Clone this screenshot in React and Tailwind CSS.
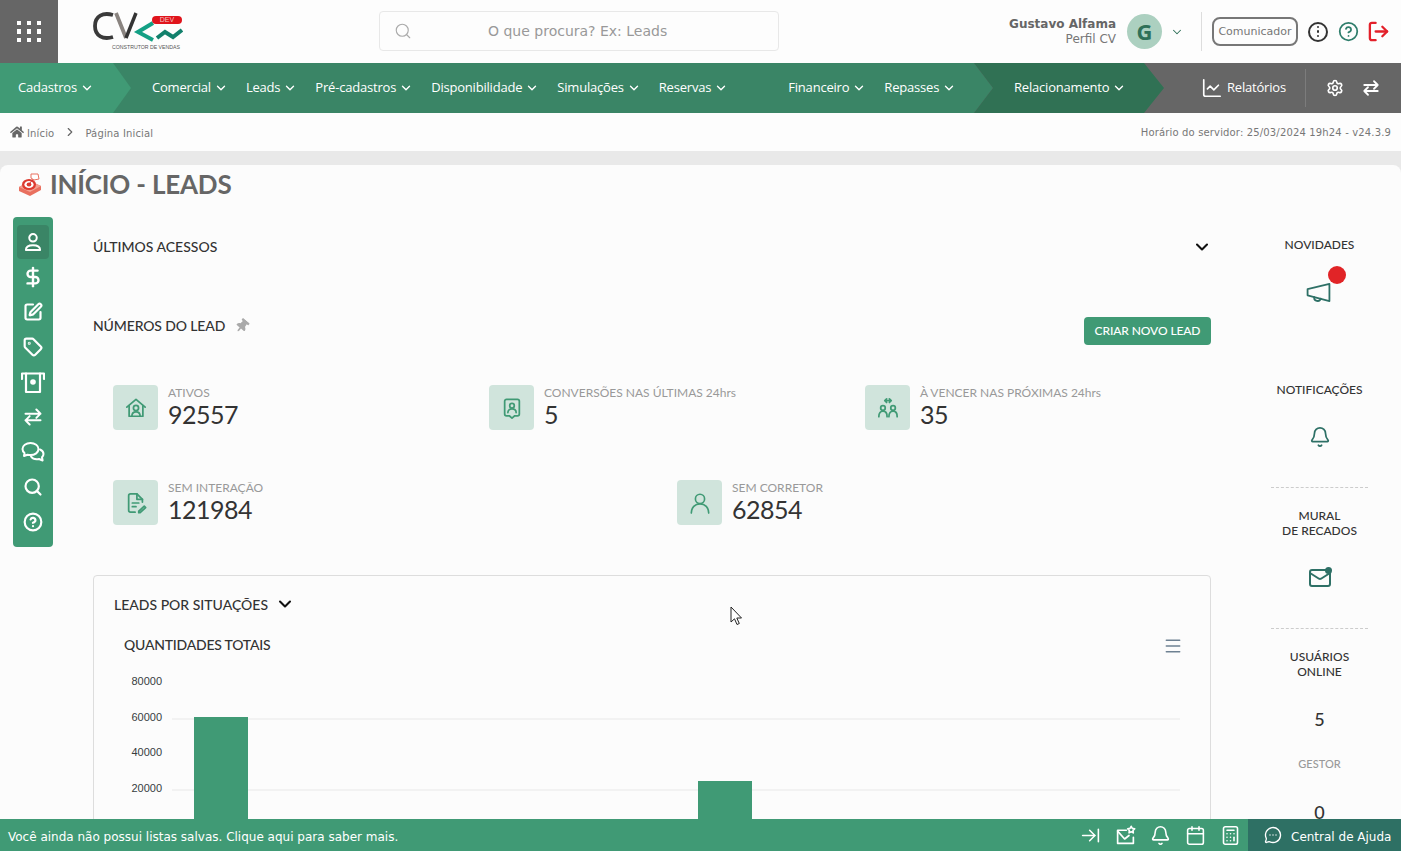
import { ArrowRightToLine, Bell, Calculator, Calendar, ChartLine, ChevronDown, ChevronRight, CircleHelp, LogOut, Mail, MessageCircleMore, Search, Settings, SquarePen, Tag, DollarSign, Menu } from 'lucide-react';
import { FaHome, FaThumbtack } from 'react-icons/fa';

const verdana = "font-['DejaVu_Sans',sans-serif]";

const Swap = ({ className }) => (
  <svg viewBox="0 0 24 24" className={className} fill="none" stroke="currentColor" strokeWidth="2.4" strokeLinecap="round" strokeLinejoin="round">
    <path d="M3 8h18M16 3l5 5-5 5" />
    <path d="M21 16H3M8 11l-5 5 5 5" />
  </svg>
);

const Logo = () => (
  <div className="relative w-[90px] h-[40px]">
    <svg viewBox="0 0 90 40" className="absolute left-0 top-0 w-[90px] h-[40px]" fill="none">
      <path d="M20 3C10 0 2 4 2 14s8 14 18 11" stroke="#3a3a3a" strokeWidth="3.8" />
      <path d="M23 1l10 25" stroke="#8a8480" strokeWidth="3.8" />
      <path d="M33 26L43 1" stroke="#333" strokeWidth="3.4" />
      <path d="M60 11l-15 9 15 8" stroke="#14a085" strokeWidth="4" />
      <path d="M64 26l8-6 8 5 9-7" stroke="#12806c" strokeWidth="4" />
    </svg>
    <span className="absolute left-[59px] top-[4px] w-[30px] h-[8px] rounded-full bg-[#e0141c] text-[#f4c0c0] text-[7px] leading-[8px] text-center font-['Liberation_Sans',sans-serif]">DEV</span>
    <span className="absolute left-[19px] top-[32px] whitespace-nowrap text-[5.2px] leading-[7px] text-[#555] font-['Liberation_Sans',sans-serif]">CONSTRUTOR DE VENDAS</span>
  </div>
);

const TitleIcon = () => (
  <svg viewBox="0 0 24 24" className="w-[24px] h-[24px]">
    <path d="M1 15l11-6 11 5v4l-11 6-11-5z" fill="#e9705f" />
    <path d="M1 15l11 5 11-6-11-5z" fill="#f4a092" />
    <ellipse cx="11" cy="12.5" rx="7" ry="5.5" fill="#dd3b30" />
    <ellipse cx="11" cy="12.5" rx="4.6" ry="3.6" fill="#fff" />
    <ellipse cx="11" cy="12.5" rx="2.4" ry="1.9" fill="#dd3b30" />
    <path d="M11 12L17 5" stroke="#c33" strokeWidth="1" />
    <path d="M13 2h7l1 5-5 1-3-2z" fill="#fff" stroke="#e9705f" strokeWidth="1" />
  </svg>
);

const SideUser = ({ className }) => (
  <svg viewBox="0 0 24 24" className={className} fill="none" stroke="currentColor" strokeWidth="2.4" strokeLinejoin="round">
    <circle cx="12" cy="7" r="4.500" />
    <path d="M3.500 21.500c0-3.500 3.500-5.500 8.500-5.500s8.500 2 8.500 5.500z" />
  </svg>
);

const AtmIcon = ({ className }) => (
  <svg viewBox="0 0 24 24" className={className} fill="none" stroke="currentColor" strokeWidth="2.2" strokeLinecap="round" strokeLinejoin="round">
    <path d="M1 9V3.500h22V9" />
    <path d="M5 3.500V22h14V3.500" />
    <circle cx="12" cy="12" r="2.800" fill="currentColor" stroke="none" />
  </svg>
);

const ChatsIcon = ({ className }) => (
  <svg viewBox="0 0 24 24" className={className} fill="none" stroke="currentColor" strokeWidth="2" strokeLinecap="round" strokeLinejoin="round">
    <path d="M9.500 3C5 3 1.500 5.700 1.500 9c0 1.600.8 3 2 4L3 16l3.500-1.300c1 .3 2 .4 3 .4 4.500 0 8-2.700 8-6S14 3 9.500 3z" />
    <path d="M19 9.500c2.200.9 3.500 2.600 3.500 4.500 0 1.300-.6 2.400-1.500 3.300l.6 3.200-3.600-1.500c-3.200.7-6.500-.4-8-2.500" />
  </svg>
);

const HouseUser = ({ className }) => (
  <svg viewBox="0 0 24 24" className={className} fill="none" stroke="currentColor" strokeWidth="1.9" strokeLinecap="round" strokeLinejoin="round">
    <path d="M2 11l10-8.500L22 11" />
    <path d="M4.500 9.500V21h15V9.500" />
    <circle cx="12" cy="12" r="2.800" />
    <path d="M7.500 21c0-3 2-4.800 4.500-4.800s4.500 1.800 4.500 4.800" />
  </svg>
);

const BadgeUser = ({ className }) => (
  <svg viewBox="0 0 24 24" className={className} fill="none" stroke="currentColor" strokeWidth="1.9" strokeLinecap="round" strokeLinejoin="round">
    <path d="M6 2.500h12a2 2 0 0 1 2 2v14a2 2 0 0 1-2 2h-3l-3 2.500-3-2.500H6a2 2 0 0 1-2-2v-14a2 2 0 0 1 2-2z" />
    <circle cx="12" cy="9.500" r="2.500" />
    <path d="M7.500 17c0-2.500 2-4 4.500-4s4.500 1.500 4.500 4" />
  </svg>
);

const PeopleSwap = ({ className }) => (
  <svg viewBox="0 0 24 24" className={className} fill="none" stroke="currentColor" strokeWidth="1.9" strokeLinecap="round" strokeLinejoin="round">
    <path d="M9 4h6M10.500 2L8.500 4l2 2M13.500 2l2 2-2 2" />
    <circle cx="6.500" cy="12" r="2.500" />
    <circle cx="17.500" cy="12" r="2.500" />
    <path d="M2 21.500c0-4 2-6 4.500-6s4.500 2 4.500 6M13 21.500c0-4 2-6 4.500-6s4.500 2 4.500 6" />
  </svg>
);

const FileEdit = ({ className }) => (
  <svg viewBox="0 0 24 24" className={className} fill="none" stroke="currentColor" strokeWidth="1.9" strokeLinecap="round" strokeLinejoin="round">
    <path d="M11 22H6a2 2 0 0 1-2-2V4a2 2 0 0 1 2-2h7l6 6v3" />
    <path d="M13 2v6h6" />
    <path d="M8 12h7M8 16h4" />
    <path d="M15 21l6-5.500 1.500 1.500-6 5.500H15z" />
  </svg>
);

const UserOutline = ({ className }) => (
  <svg viewBox="0 0 24 24" className={className} fill="none" stroke="currentColor" strokeWidth="1.8" strokeLinecap="round">
    <circle cx="12" cy="7.500" r="5" />
    <path d="M2.500 23c0-6 4-10 9.500-10s9.500 4 9.500 10" />
  </svg>
);

const MailStar = ({ className }) => (
  <svg viewBox="0 0 24 24" className={className} fill="none" stroke="currentColor" strokeWidth="1.900" strokeLinecap="round" strokeLinejoin="round">
    <path d="M13 6H3v15h18v-7" />
    <path d="M3 7l8 9 5-4" />
    <path d="M18.500 1.500l1.300 2.300 2.700.5-1.900 2 .3 2.700-2.400-1.200-2.400 1.200.3-2.700-1.900-2 2.700-.5z" />
  </svg>
);

const Horn = ({ className }) => (
  <svg viewBox="0 0 26 20" className={className} fill="none" stroke="currentColor" strokeWidth="1.900" strokeLinecap="round" strokeLinejoin="round">
    <path d="M1.500 6.500L24.500 1v18L1.500 13z" />
    <path d="M8.500 15a3.500 3.500 0 0 0 6.800 1.500" />
  </svg>
);

const Cursor = () => (
  <svg viewBox="0 0 14 20" className="absolute left-[730px] top-[606px] w-[14px] h-[20px]">
    <path d="M1 1v15l3.500-3.200 2.500 5.700 2.300-1-2.500-5.500H11.500z" fill="#fff" stroke="#222" strokeWidth="1" />
  </svg>
);

const navA = ['Comercial', 'Leads', 'Pré-cadastros', 'Disponibilidade', 'Simulações', 'Reservas'];
const navB = ['Financeiro', 'Repasses'];

const NavItem = ({ label }) => (
  <span className="flex items-center gap-[3px] whitespace-nowrap">
    {label}
    <ChevronDown className="w-[14px] h-[14px]" strokeWidth={2.4} />
  </span>
);

const Stat = ({ icon: Icon, label, value }) => (
  <div className="flex">
    <div className="w-[45px] h-[45px] rounded bg-[#d0e4dc] flex items-center justify-center text-[#409a75]">
      <Icon className="w-[22px] h-[22px]" />
    </div>
    <div className="ml-[10px]">
      <div className="text-[12px] leading-[16px] text-[#999] whitespace-nowrap">{label}</div>
      <div className="-mt-[1px] text-[25px] leading-[28px] text-[#333] tracking-[-0.5px]">{value}</div>
    </div>
  </div>
);

const sideIcons = [
  { icon: DollarSign, size: 'w-[22px] h-[22px]' },
  { icon: SquarePen, size: 'w-[20px] h-[20px]' },
  { icon: Tag, size: 'w-[20px] h-[20px]' },
  { icon: AtmIcon, size: 'w-[24px] h-[24px]' },
  { icon: Swap, size: 'w-[20px] h-[20px]' },
  { icon: ChatsIcon, size: 'w-[24px] h-[24px]' },
  { icon: Search, size: 'w-[20px] h-[20px]' },
  { icon: CircleHelp, size: 'w-[20px] h-[20px]' },
];

export default function App() {
  return (
    <div className="relative h-screen overflow-hidden bg-[#e9e9e9] font-['Lato',sans-serif]">
      {/* topo */}
      <header className="h-[63px] bg-[#fdfdfd] flex items-center">
        <div className="w-[58px] h-full bg-[#666] flex items-center justify-center">
          <div className="grid grid-cols-3 gap-x-[5.500px] gap-y-[4px]">
            {Array.from({ length: 9 }).map((_, i) => (
              <span key={i} className="w-[4.500px] h-[4.500px] bg-white" />
            ))}
          </div>
        </div>
        <div className="ml-[35px] mt-[1px]"><Logo /></div>
        <div className={`ml-[196px] -mt-[2px] w-[400px] h-[40px] border border-[#e8e8e8] rounded flex items-center text-[#999] text-[14px] ${verdana}`}>
          <Search className="ml-[14px] w-[18px] h-[18px] text-[#aaa]" strokeWidth={1.5} />
          <span className="ml-[76px] mt-[1px]">O que procura? Ex: Leads</span>
        </div>
        <div className={`ml-auto text-right ${verdana}`}>
          <div className="text-[12px] leading-[15px] font-bold text-[#666]">Gustavo Alfama</div>
          <div className="text-[12px] leading-[15px] text-[#777]">Perfil CV</div>
        </div>
        <div className="ml-[11px] w-[35px] h-[35px] rounded-full bg-[#acd0c0] text-[#2f7058] text-[22px] font-bold flex items-center justify-center font-['Open_Sans',sans-serif]">G</div>
        <ChevronDown className="ml-[8px] w-[14px] h-[14px] text-[#2f7058]" strokeWidth={1.8} />
        <div className="ml-[17px] w-px h-[39px] bg-[#ddd]" />
        <div className={`ml-[10px] w-[86px] h-[29px] pt-[2px] border-2 border-[#777] rounded-lg flex items-center justify-center text-[11px] text-[#777] ${verdana}`}>Comunicador</div>
        <div className="ml-[10px] w-[20px] h-[20px] rounded-full border-2 border-[#333] flex flex-col items-center justify-center gap-[2px]">
          <span className="w-[2.500px] h-[2.500px] rounded-full bg-[#333]" />
          <span className="w-[2.500px] h-[2.500px] rounded-full bg-[#333]" />
          <span className="w-[2.500px] h-[2.500px] rounded-full bg-[#333]" />
        </div>
        <CircleHelp className="ml-[10px] w-[21px] h-[21px] text-[#2e7d6b]" strokeWidth={2} />
        <LogOut className="ml-[8px] mr-[11px] w-[23px] h-[23px] text-[#e3202a]" strokeWidth={2.400} />
      </header>

      {/* menu */}
      <nav className="h-[50px] bg-[#666] flex text-white text-[13px] font-medium font-['Open_Sans',sans-serif] tracking-[-0.2px]">
        <div className="w-[993px] flex bg-[#3a8566] [clip-path:polygon(0_0,974px_0,993px_50%,974px_100%,0_100%)]">
          <div className="w-[131px] pl-[18px] flex items-center bg-[#409a75] [clip-path:polygon(0_0,113px_0,131px_50%,113px_100%,0_100%)]">
            <NavItem label="Cadastros" />
          </div>
          <div className="ml-[21px] flex items-center gap-[18px]">
            {navA.map((n) => <NavItem key={n} label={n} />)}
          </div>
          <div className="ml-[60px] flex items-center gap-[18px]">
            {navB.map((n) => <NavItem key={n} label={n} />)}
          </div>
        </div>
        <div className="-ml-[19px] w-[190px] pl-[40px] flex items-center bg-[#307154] [clip-path:polygon(0_0,170px_0,190px_50%,170px_100%,0_100%,19px_50%)]">
          <NavItem label="Relacionamento" />
        </div>
        <div className="ml-[37px] flex items-center">
          <ChartLine className="w-[22px] h-[22px]" strokeWidth={1.800} />
          <span className="ml-[4px]">Relatórios</span>
          <span className="ml-[19px] w-px h-[38px] bg-[#7c7c7c]" />
          <Settings className="ml-[20px] w-[18px] h-[18px]" strokeWidth={2.200} />
          <Swap className="ml-[18px] w-[18px] h-[18px]" />
        </div>
      </nav>

      {/* breadcrumb */}
      <div className={`h-[38px] bg-[#fdfdfd] flex items-center pl-[10px] pr-[10px] text-[10px] text-[#777] tracking-[0.15px] ${verdana}`}>
        <FaHome className="w-[14px] h-[14px] text-[#666]" />
        <span className="ml-[3px] mt-[2px]">Início</span>
        <ChevronRight className="ml-[9px] w-[14px] h-[14px] text-[#666]" strokeWidth={2} />
        <span className="ml-[8px] mt-[2px]">Página Inicial</span>
        <span className="ml-auto">Horário do servidor: 25/03/2024 19h24 - v24.3.9</span>
      </div>

      {/* conteudo */}
      <div className="mt-[14px] h-[686px] bg-[#fcfcfc] rounded-t-[8px] overflow-hidden">
        <div className="h-[38px] pl-[18px] flex items-center">
          <TitleIcon />
          <h1 className="ml-[8px] text-[26px] font-bold text-[#666] tracking-[-0.2px]">INÍCIO - LEADS</h1>
        </div>
        <div className="mt-[14px] pl-[13px] flex items-start">
          {/* barra lateral */}
          <aside className="w-[40px] h-[330px] rounded bg-[#409a75] text-white pt-[8px] flex flex-col items-center">
            <div className="w-[32px] h-[34px] rounded-sm bg-[#3a8566] flex items-center justify-center">
              <SideUser className="w-[20px] h-[20px]" />
            </div>
            {sideIcons.map(({ icon: Icon, size }, i) => (
              <div key={i} className="h-[35px] w-[32px] flex items-center justify-center">
                <Icon className={size} strokeWidth={2.600} />
              </div>
            ))}
          </aside>

          <main className="ml-[40px] w-[1118px] text-[14px] text-[#333]">
            <div className="h-[20px] mt-[19px] flex items-center justify-between font-medium">
              <span>ÚLTIMOS ACESSOS</span>
              <ChevronDown className="mt-[2px] -mr-[1px] w-[20px] h-[20px] text-[#111]" strokeWidth={2.500} />
            </div>
            <div className="mt-[59px] h-[20px] flex items-center font-medium">
              <span className="tracking-[-0.13px]">NÚMEROS DO LEAD</span>
              <FaThumbtack className="ml-[10px] mt-[2px] w-[14px] h-[14px] text-[#aaa] rotate-[40deg]" />
            </div>
            <div className="-mt-[18px] flex justify-end">
              <button className="w-[127px] h-[28px] rounded bg-[#409a75] text-white text-[12px] font-medium tracking-[-0.1px]">CRIAR NOVO LEAD</button>
            </div>

            <div className="mt-[40px] ml-[20px] grid grid-cols-[376px_376px_1fr]">
              <Stat icon={HouseUser} label="ATIVOS" value="92557" />
              <Stat icon={BadgeUser} label="CONVERSÕES NAS ÚLTIMAS 24hrs" value="5" />
              <Stat icon={PeopleSwap} label="À VENCER NAS PRÓXIMAS 24hrs" value="35" />
            </div>
            <div className="mt-[50px] ml-[20px] grid grid-cols-[564px_1fr]">
              <Stat icon={FileEdit} label="SEM INTERAÇÃO" value="121984" />
              <Stat icon={UserOutline} label="SEM CORRETOR" value="62854" />
            </div>

            <section className="mt-[50px] h-[300px] border border-[#ddd] rounded bg-[#fcfcfc]">
              <div className="mt-[19px] ml-[20px] h-[18px] flex items-center font-medium">
                LEADS POR SITUAÇÕES
                <ChevronDown className="ml-[7px] w-[20px] h-[20px] text-[#111]" strokeWidth={2.500} />
              </div>
              <div className="mt-[21px] ml-[30px] mr-[27px] h-[20px] flex items-center justify-between font-medium">
                <span className="tracking-[-0.22px]">QUANTIDADES TOTAIS</span>
                <Menu className="mt-[3px] w-[20px] h-[20px] text-[#6e8192]" strokeWidth={1.800} />
              </div>
              <svg viewBox="0 0 1116 200" className="mt-[2px] block w-[1116px] h-[200px]">
                <line x1="78" x2="1086" y1="63" y2="63" stroke="#e8e8e8" />
                <line x1="78" x2="1086" y1="134" y2="134" stroke="#e8e8e8" />
                <rect x="100" y="61" width="54" height="139" fill="#409a75" />
                <rect x="604" y="125" width="54" height="75" fill="#409a75" />
                {[['80000', 29], ['60000', 65], ['40000', 100], ['20000', 136]].map(([t, y]) => (
                  <text key={t} x="68" y={y} textAnchor="end" fontSize="11" fill="#373d3f" fontFamily="Liberation Sans, sans-serif">{t}</text>
                ))}
              </svg>
            </section>
          </main>

          {/* coluna direita */}
          <aside className="ml-[29px] w-[160px] pr-[1px] text-[12px] leading-[15px] text-[#333] text-center font-medium">
            <div className="mt-[20px]">NOVIDADES</div>
            <div className="relative mt-[16px] h-[34px] flex justify-center items-end">
              <Horn className="w-[25px] h-[19px] -translate-x-[1px] text-[#2e7066]" />
              <span className="absolute left-[88px] -top-[2px] w-[18px] h-[18px] rounded-full bg-[#e12427]" />
            </div>
            <div className="mt-[80px]">NOTIFICAÇÕES</div>
            <div className="mt-[29px] flex justify-center">
              <Bell className="w-[22px] h-[22px] text-[#2e7066]" strokeWidth={1.900} />
            </div>
            <div className="mt-[39px] mx-[31px] border-t border-dashed border-[#ccc]" />
            <div className="mt-[20px]">MURAL<br />DE RECADOS</div>
            <div className="relative mt-[28px] flex justify-center">
              <Mail className="w-[24px] h-[24px] text-[#2e7066]" strokeWidth={2} />
              <span className="absolute left-[85px] top-[1px] w-[7px] h-[7px] rounded-full bg-[#2e7066]" />
            </div>
            <div className="mt-[38px] mx-[31px] border-t border-dashed border-[#ccc]" />
            <div className="mt-[20px]">USUÁRIOS<br />ONLINE</div>
            <div className="mt-[30px] text-[18px] leading-[20px]">5</div>
            <div className="mt-[28px] text-[11px] leading-[14px] text-[#999]">GESTOR</div>
            <div className="mt-[31px] text-[18px] leading-[20px]">0</div>
          </aside>
        </div>
      </div>

      <Cursor />

      {/* rodape */}
      <footer className={`fixed bottom-0 left-0 right-0 h-[32px] bg-[#409a75] text-white text-[12px] flex items-center ${verdana}`}>
        <span className="ml-[8px] mt-[3px]">Você ainda não possui listas salvas. Clique aqui para saber mais.</span>
        <div className="ml-auto flex items-center gap-[14px] pr-[7px] mt-[1px]">
          <ArrowRightToLine className="w-[21px] h-[21px]" strokeWidth={1.800} />
          <MailStar className="w-[21px] h-[21px]" />
          <Bell className="w-[21px] h-[21px]" strokeWidth={1.800} />
          <Calendar className="w-[21px] h-[21px]" strokeWidth={1.800} />
          <Calculator className="w-[21px] h-[21px]" strokeWidth={1.800} />
        </div>
        <div className="w-[153px] h-full bg-[#2e7064] flex items-center pl-[16px]">
          <MessageCircleMore className="w-[18px] h-[18px]" strokeWidth={1.800} />
          <span className="ml-[9px] mt-[3px]">Central de Ajuda</span>
        </div>
      </footer>
    </div>
  );
}
